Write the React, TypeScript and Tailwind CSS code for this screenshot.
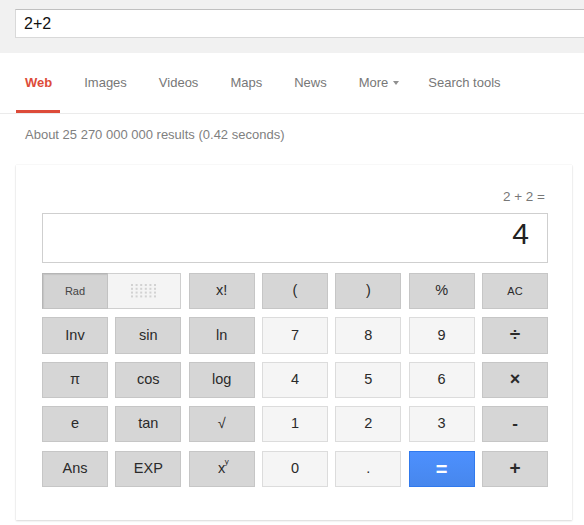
import React from "react";

type Kind = "gray" | "light" | "blue";

function Btn({ label, kind = "gray", small = false }: { label: React.ReactNode; kind?: Kind; small?: boolean }) {
  let cls = "h-full flex items-center justify-center text-[#2a2a2a] select-none";
  cls += small ? " text-[11px]" : " text-[14.5px]";
  if (kind === "gray") cls += " bg-[#d6d6d6] border border-[#c6c6c6]";
  if (kind === "light") cls += " bg-[#f5f5f5] border border-[#dcdcdc]";
  if (kind === "blue")
    cls += " bg-gradient-to-b from-[#4d90fe] to-[#4787ed] border border-[#3079ed] text-white";
  return <div className={cls}>{label}</div>;
}

function Dots() {
  const dots = [];
  for (let r = 0; r < 4; r++) {
    for (let c = 0; c < 6; c++) {
      dots.push(<rect key={`${r}-${c}`} x={c * 4.6} y={r * 3.8} width={2} height={2} fill="#d2d2d2" />);
    }
  }
  return (
    <svg width="26" height="14" viewBox="0 0 26 14">
      {dots}
    </svg>
  );
}

export default function App() {
  const tabs = ["Images", "Videos", "Maps", "News"];
  return (
    <div className="w-[584px] h-[525px] bg-white overflow-hidden font-['Liberation_Sans','Arial',sans-serif]">
      {/* Search bar */}
      <div className="h-[53px] bg-[#f1f1f1] pt-[9px] pl-[15px] overflow-hidden">
        <div className="h-[29px] w-[620px] bg-white border border-[#d9d9d9] border-t-[#c0c0c0] flex items-center pl-[8px] text-[16px] text-[#111]">
          2+2
        </div>
      </div>

      {/* Nav */}
      <div className="h-[61px] border-b border-[#ebebeb] flex pl-[17px] gap-[16px] text-[13px] text-[#777]">
        <div className="flex flex-col px-[8px]">
          <div className="h-[57px] pt-[2px] flex items-center font-bold text-[#dd4b39]">Web</div>
          <div className="h-[3px] bg-[#dd4b39] -ml-[9px] -mr-[8px]" />
        </div>
        {tabs.map((t) => (
          <div key={t} className="flex flex-col px-[8px]">
            <div className="h-[57px] pt-[2px] flex items-center">{t}</div>
          </div>
        ))}
        <div className="flex flex-col px-[8px]">
          <div className="h-[57px] pt-[2px] flex items-center">
            More
            <span className="ml-[5px] mt-[1px] w-0 h-0 border-x-[3.5px] border-x-transparent border-t-[4px] border-t-[#909090]" />
          </div>
        </div>
        <div className="flex flex-col px-[8px] -ml-[3px]">
          <div className="h-[57px] pt-[2px] flex items-center">Search tools</div>
        </div>
      </div>

      {/* Results stats */}
      <div className="pt-[13px] pl-[25px] text-[13px] leading-[15px] text-[#808080]">
        About 25 270 000 000 results (0.42 seconds)
      </div>

      {/* Calculator card */}
      <div className="mt-[22.5px] ml-[16px] w-[556px] h-[355px] bg-white shadow-[0_1px_2px_rgba(0,0,0,0.14),0_0_1px_rgba(0,0,0,0.12)] pt-[24.5px] pl-[26px] pr-[24px]">
        <div className="text-right pr-[3px] text-[13.5px] leading-[15px] text-[#777]">2 + 2 =</div>
        <div className="mt-[8.5px] h-[50px] border border-[#cfcfcf] flex justify-end items-start pt-[5px] pr-[18px]">
          <span className="text-[30px] leading-[30px] text-[#222]">4</span>
        </div>

        <div className="mt-[10.5px] grid grid-cols-7 auto-rows-[36.2px] gap-x-[7.33px] gap-y-[8.2px]">
          {/* Row 1 */}
          <div className="col-span-2 flex h-full">
            <div className="w-[66px] h-full flex items-center justify-center bg-[#d3d3d3] border border-[#c2c2c2] border-l-[#b5b5b5] border-t-[#b5b5b5] shadow-[inset_1px_1px_1px_rgba(0,0,0,0.08)] text-[11px] text-[#444]">
              Rad
            </div>
            <div className="flex-1 h-full flex items-center justify-center bg-[#f4f4f4] border border-l-0 border-[#cfcfcf]">
              <Dots />
            </div>
          </div>
          <Btn label="x!" />
          <Btn label="(" />
          <Btn label=")" />
          <Btn label="%" />
          <Btn label="AC" small />

          {/* Row 2 */}
          <Btn label="Inv" />
          <Btn label="sin" />
          <Btn label="ln" />
          <Btn label="7" kind="light" />
          <Btn label="8" kind="light" />
          <Btn label="9" kind="light" />
          <Btn label={<span className="text-[19px] font-bold">÷</span>} />

          {/* Row 3 */}
          <Btn label="π" />
          <Btn label="cos" />
          <Btn label="log" />
          <Btn label="4" kind="light" />
          <Btn label="5" kind="light" />
          <Btn label="6" kind="light" />
          <Btn label={<span className="text-[18px] font-bold">×</span>} />

          {/* Row 4 */}
          <Btn label="e" />
          <Btn label="tan" />
          <Btn label="√" />
          <Btn label="1" kind="light" />
          <Btn label="2" kind="light" />
          <Btn label="3" kind="light" />
          <Btn label={<span className="text-[17px] font-bold">-</span>} />

          {/* Row 5 */}
          <Btn label="Ans" />
          <Btn label="EXP" />
          <Btn
            label={
              <span className="relative">
                x<span className="absolute left-[calc(100%-0.5px)] top-[0px] text-[8px] leading-[8px]">y</span>
              </span>
            }
          />
          <Btn label="0" kind="light" />
          <Btn label="." kind="light" />
          <Btn label={<span className="text-[20px] font-bold text-white">=</span>} kind="blue" />
          <Btn label={<span className="text-[19px] font-bold">+</span>} />
        </div>
      </div>
    </div>
  );
}
